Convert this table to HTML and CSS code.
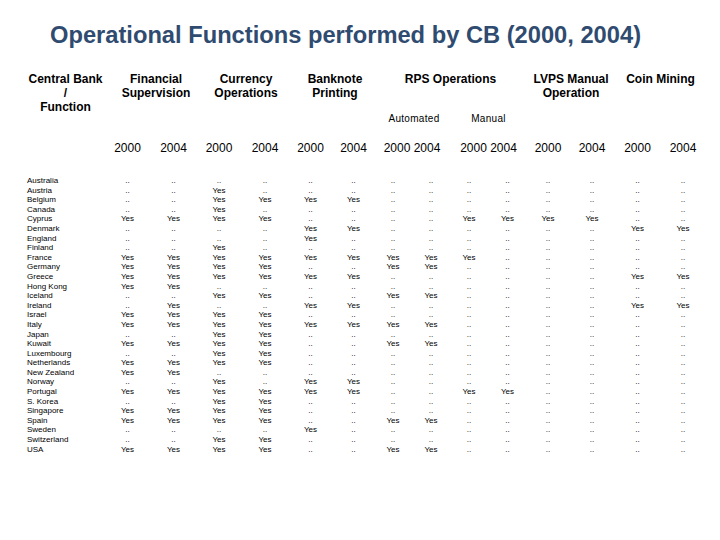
FILE: index.html
```html
<!DOCTYPE html>
<html>
<head>
<meta charset="utf-8">
<link rel="stylesheet" href="styles.css">
</head>
<body>
<div class="slide">
  <h1 class="title">Operational Functions performed by CB (2000, 2004)</h1>
  <div class="table">
    <div class="groups">
      <div class="grp">Central Bank<br>/<br>Function</div>
      <div class="grp fs">Financial<br>Supervision</div>
      <div class="grp co">Currency<br>Operations</div>
      <div class="grp bn">Banknote<br>Printing</div>
      <div class="grp rps">RPS Operations
        <div class="sub"><span>Automated</span><span>Manual</span></div>
      </div>
      <div class="grp">LVPS Manual<br>Operation</div>
      <div class="grp">Coin Mining</div>
    </div>
    <div class="years">
      <span></span>
      <span>2000</span><span>2004</span>
      <span>2000</span><span>2004</span>
      <span>2000</span><span>2004</span>
      <span class="span2">2000 2004</span>
      <span class="span2">2000 2004</span>
      <span>2000</span><span>2004</span>
      <span>2000</span><span>2004</span>
    </div>
    <div class="body">
      <div class="row"><span class="name">Australia</span><span>..</span><span>..</span><span>..</span><span>..</span><span>..</span><span>..</span><span>..</span><span>..</span><span>..</span><span>..</span><span>..</span><span>..</span><span>..</span><span>..</span></div>
      <div class="row"><span class="name">Austria</span><span>..</span><span>..</span><span>Yes</span><span>..</span><span>..</span><span>..</span><span>..</span><span>..</span><span>..</span><span>..</span><span>..</span><span>..</span><span>..</span><span>..</span></div>
      <div class="row"><span class="name">Belgium</span><span>..</span><span>..</span><span>Yes</span><span>Yes</span><span>Yes</span><span>Yes</span><span>..</span><span>..</span><span>..</span><span>..</span><span>..</span><span>..</span><span>..</span><span>..</span></div>
      <div class="row"><span class="name">Canada</span><span>..</span><span>..</span><span>Yes</span><span>..</span><span>..</span><span>..</span><span>..</span><span>..</span><span>..</span><span>..</span><span>..</span><span>..</span><span>..</span><span>..</span></div>
      <div class="row"><span class="name">Cyprus</span><span>Yes</span><span>Yes</span><span>Yes</span><span>Yes</span><span>..</span><span>..</span><span>..</span><span>..</span><span>Yes</span><span>Yes</span><span>Yes</span><span>Yes</span><span>..</span><span>..</span></div>
      <div class="row"><span class="name">Denmark</span><span>..</span><span>..</span><span>..</span><span>..</span><span>Yes</span><span>Yes</span><span>..</span><span>..</span><span>..</span><span>..</span><span>..</span><span>..</span><span>Yes</span><span>Yes</span></div>
      <div class="row"><span class="name">England</span><span>..</span><span>..</span><span>..</span><span>..</span><span>Yes</span><span>..</span><span>..</span><span>..</span><span>..</span><span>..</span><span>..</span><span>..</span><span>..</span><span>..</span></div>
      <div class="row"><span class="name">Finland</span><span>..</span><span>..</span><span>Yes</span><span>..</span><span>..</span><span>..</span><span>..</span><span>..</span><span>..</span><span>..</span><span>..</span><span>..</span><span>..</span><span>..</span></div>
      <div class="row"><span class="name">France</span><span>Yes</span><span>Yes</span><span>Yes</span><span>Yes</span><span>Yes</span><span>Yes</span><span>Yes</span><span>Yes</span><span>Yes</span><span>..</span><span>..</span><span>..</span><span>..</span><span>..</span></div>
      <div class="row"><span class="name">Germany</span><span>Yes</span><span>Yes</span><span>Yes</span><span>Yes</span><span>..</span><span>..</span><span>Yes</span><span>Yes</span><span>..</span><span>..</span><span>..</span><span>..</span><span>..</span><span>..</span></div>
      <div class="row"><span class="name">Greece</span><span>Yes</span><span>Yes</span><span>Yes</span><span>Yes</span><span>Yes</span><span>Yes</span><span>..</span><span>..</span><span>..</span><span>..</span><span>..</span><span>..</span><span>Yes</span><span>Yes</span></div>
      <div class="row"><span class="name">Hong Kong</span><span>Yes</span><span>Yes</span><span>..</span><span>..</span><span>..</span><span>..</span><span>..</span><span>..</span><span>..</span><span>..</span><span>..</span><span>..</span><span>..</span><span>..</span></div>
      <div class="row"><span class="name">Iceland</span><span>..</span><span>..</span><span>Yes</span><span>Yes</span><span>..</span><span>..</span><span>Yes</span><span>Yes</span><span>..</span><span>..</span><span>..</span><span>..</span><span>..</span><span>..</span></div>
      <div class="row"><span class="name">Ireland</span><span>..</span><span>Yes</span><span>..</span><span>..</span><span>Yes</span><span>Yes</span><span>..</span><span>..</span><span>..</span><span>..</span><span>..</span><span>..</span><span>Yes</span><span>Yes</span></div>
      <div class="row"><span class="name">Israel</span><span>Yes</span><span>Yes</span><span>Yes</span><span>Yes</span><span>..</span><span>..</span><span>..</span><span>..</span><span>..</span><span>..</span><span>..</span><span>..</span><span>..</span><span>..</span></div>
      <div class="row"><span class="name">Italy</span><span>Yes</span><span>Yes</span><span>Yes</span><span>Yes</span><span>Yes</span><span>Yes</span><span>Yes</span><span>Yes</span><span>..</span><span>..</span><span>..</span><span>..</span><span>..</span><span>..</span></div>
      <div class="row"><span class="name">Japan</span><span>..</span><span>..</span><span>Yes</span><span>Yes</span><span>..</span><span>..</span><span>..</span><span>..</span><span>..</span><span>..</span><span>..</span><span>..</span><span>..</span><span>..</span></div>
      <div class="row"><span class="name">Kuwait</span><span>Yes</span><span>Yes</span><span>Yes</span><span>Yes</span><span>..</span><span>..</span><span>Yes</span><span>Yes</span><span>..</span><span>..</span><span>..</span><span>..</span><span>..</span><span>..</span></div>
      <div class="row"><span class="name">Luxembourg</span><span>..</span><span>..</span><span>Yes</span><span>Yes</span><span>..</span><span>..</span><span>..</span><span>..</span><span>..</span><span>..</span><span>..</span><span>..</span><span>..</span><span>..</span></div>
      <div class="row"><span class="name">Netherlands</span><span>Yes</span><span>Yes</span><span>Yes</span><span>Yes</span><span>..</span><span>..</span><span>..</span><span>..</span><span>..</span><span>..</span><span>..</span><span>..</span><span>..</span><span>..</span></div>
      <div class="row"><span class="name">New Zealand</span><span>Yes</span><span>Yes</span><span>..</span><span>..</span><span>..</span><span>..</span><span>..</span><span>..</span><span>..</span><span>..</span><span>..</span><span>..</span><span>..</span><span>..</span></div>
      <div class="row"><span class="name">Norway</span><span>..</span><span>..</span><span>Yes</span><span>..</span><span>Yes</span><span>Yes</span><span>..</span><span>..</span><span>..</span><span>..</span><span>..</span><span>..</span><span>..</span><span>..</span></div>
      <div class="row"><span class="name">Portugal</span><span>Yes</span><span>Yes</span><span>Yes</span><span>Yes</span><span>Yes</span><span>Yes</span><span>..</span><span>..</span><span>Yes</span><span>Yes</span><span>..</span><span>..</span><span>..</span><span>..</span></div>
      <div class="row"><span class="name">S. Korea</span><span>..</span><span>..</span><span>Yes</span><span>Yes</span><span>..</span><span>..</span><span>..</span><span>..</span><span>..</span><span>..</span><span>..</span><span>..</span><span>..</span><span>..</span></div>
      <div class="row"><span class="name">Singapore</span><span>Yes</span><span>Yes</span><span>Yes</span><span>Yes</span><span>..</span><span>..</span><span>..</span><span>..</span><span>..</span><span>..</span><span>..</span><span>..</span><span>..</span><span>..</span></div>
      <div class="row"><span class="name">Spain</span><span>Yes</span><span>Yes</span><span>Yes</span><span>Yes</span><span>..</span><span>..</span><span>Yes</span><span>Yes</span><span>..</span><span>..</span><span>..</span><span>..</span><span>..</span><span>..</span></div>
      <div class="row"><span class="name">Sweden</span><span>..</span><span>..</span><span>..</span><span>..</span><span>Yes</span><span>..</span><span>..</span><span>..</span><span>..</span><span>..</span><span>..</span><span>..</span><span>..</span><span>..</span></div>
      <div class="row"><span class="name">Switzerland</span><span>..</span><span>..</span><span>Yes</span><span>Yes</span><span>..</span><span>..</span><span>..</span><span>..</span><span>..</span><span>..</span><span>..</span><span>..</span><span>..</span><span>..</span></div>
      <div class="row"><span class="name">USA</span><span>Yes</span><span>Yes</span><span>Yes</span><span>Yes</span><span>..</span><span>..</span><span>Yes</span><span>Yes</span><span>..</span><span>..</span><span>..</span><span>..</span><span>..</span><span>..</span></div>
    </div>
  </div>
</div>
</body>
</html>
```

FILE: styles.css
```css
html, body {
  margin: 0;
  padding: 0;
  background: #ffffff;
}

body {
  font-family: "Liberation Sans", Arial, sans-serif;
  color: #000000;
}

.slide {
  width: 720px;
  height: 540px;
  overflow: hidden;
}

.title {
  margin: 0;
  padding: 21px 0 0 50px;
  font-size: 23.7px;
  line-height: 28px;
  font-weight: bold;
  color: #2f4b70;
}

.table {
  padding-left: 27px;
  margin-top: 23px;
  --cols: 77px 47px 45px 46px 46px 45px 41px 38px 38px 38px 39px 42px 46px 45px 46px;
}

.groups {
  display: grid;
  grid-template-columns: 77px 92px 92px 86px 153px 88px 91px;
  align-items: start;
}

.grp {
  font-size: 12px;
  line-height: 14px;
  font-weight: bold;
  text-align: center;
}

.grp.fs { padding-left: 12px; }
.grp.co { padding-left: 8px; }
.grp.bn { padding-left: 8px; }

.sub {
  display: grid;
  grid-template-columns: 76px 77px;
  margin-top: 27px;
  font-size: 10px;
  line-height: 12px;
  font-weight: normal;
  letter-spacing: 0.3px;
}

.sub span:first-child { padding-left: 4px; }

.years {
  display: grid;
  grid-template-columns: var(--cols);
  margin-top: 16px;
  font-size: 12px;
  line-height: 14px;
  text-align: center;
}

.years .span2 {
  grid-column: span 2;
}

.body {
  margin-top: 21px;
}

.row {
  display: grid;
  grid-template-columns: var(--cols);
  height: 9.6px;
  font-size: 8px;
  line-height: 9.6px;
  text-align: center;
  white-space: nowrap;
}

.row .name {
  text-align: left;
}
```
